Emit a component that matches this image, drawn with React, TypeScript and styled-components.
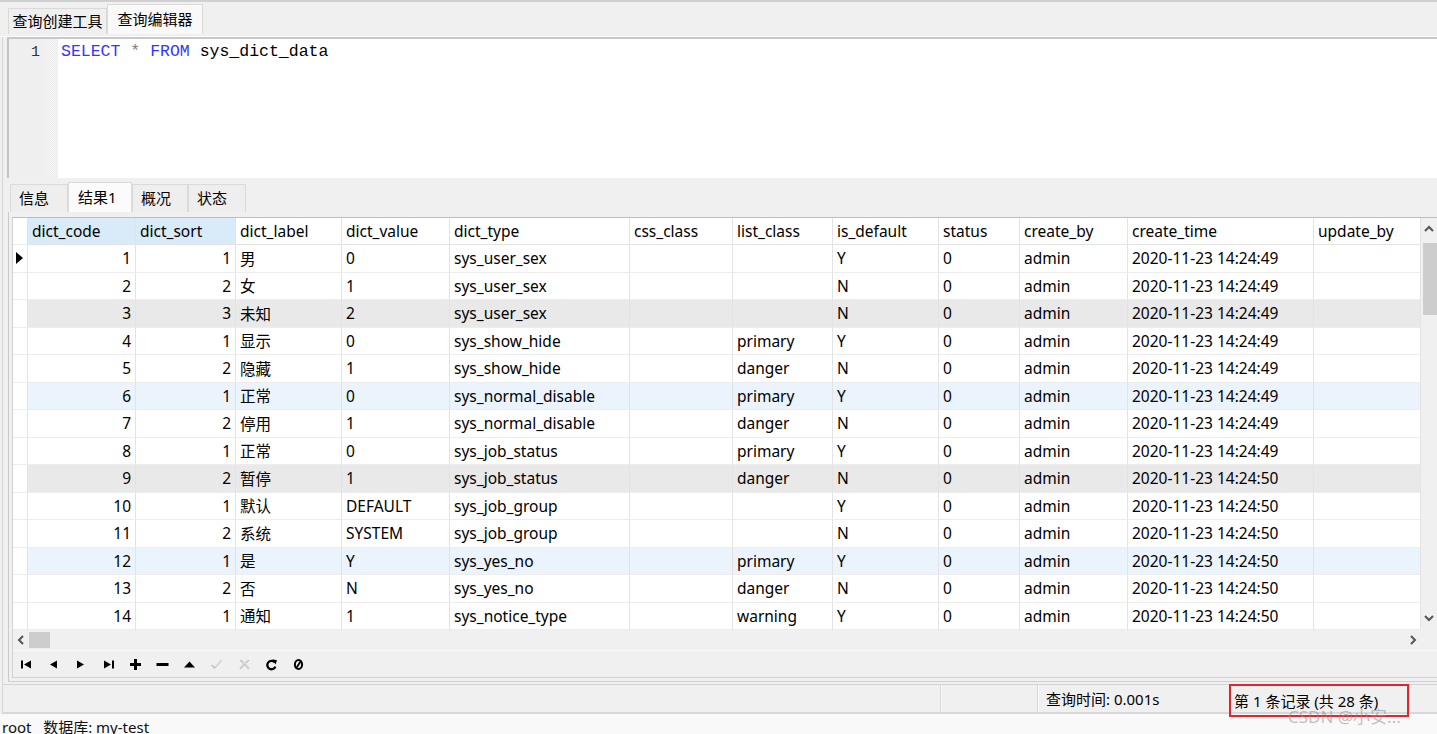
import React from 'react';
import styled, { createGlobalStyle } from 'styled-components';

const GlobalStyle = createGlobalStyle`
  html, body { margin: 0; padding: 0; background: #f0f0f0; }
  body {
    font-family: "Noto Sans", "Noto Sans CJK SC", sans-serif;
    color: #000;
  }
  * { box-sizing: border-box; }
`;

const COLS = '15px 108px 100px 106px 108px 180px 103px 100px 106px 81px 108px 186px 107px';

// Styled components
const Window = styled.div`
  position: relative;
  width: 1437px;
  height: 734px;
  overflow: hidden;
  background: #f0f0f0;
  display: flex;
  flex-direction: column;
`;

const TopBar = styled.div`
  height: 37px;
  border-top: 2px solid #d0d0d0;
  border-bottom: 1px solid #fbfbfb;
  display: flex;
  align-items: flex-end;
  padding: 0 0 2px 8px;
  flex-shrink: 0;
`;

const TopTab = styled.div<{ $active?: boolean; $w: number }>`
  width: ${p => p.$w}px;
  height: ${p => (p.$active ? 30 : 26)}px;
  padding-bottom: 2px;
  display: flex;
  align-items: center;
  justify-content: center;
  font-size: 15px;
  background: ${p => (p.$active ? '#f9f9f9' : '#efefef')};
  border: 1px solid #d9d9d9;
  border-bottom: none;
`;

const Workspace = styled.div`
  margin-left: 2px;
  border-left: 1px solid #d6d6d6;
  display: flex;
  flex-direction: column;
  flex-shrink: 0;
`;

const Editor = styled.div`
  height: 141px;
  margin-left: 4px;
  border-top: 2px solid #c8c8c8;
  border-left: 2px solid #c4c4c4;
  display: flex;
  background: #fff;
`;

const Gutter = styled.div`
  width: 35px;
  background: #efefef;
  text-align: right;
  padding: 4px 4px 0 0;
  font-family: "Liberation Mono", monospace;
  font-size: 15px;
  line-height: 20px;
  color: #333;
`;

const FoldStripe = styled.div`
  width: 14px;
  background-color: #f6f6f6;
  background-image: repeating-conic-gradient(#e9e9e9 0 25%, #f8f8f8 0 50%);
  background-size: 2px 2px;
`;

const Code = styled.div`
  flex: 1;
  padding: 3px 0 0 3px;
  font-family: "Liberation Mono", monospace;
  font-size: 16.5px;
  line-height: 20px;
  white-space: pre;
  color: #000;
`;

const Keyword = styled.span`
  color: #3535ff;
`;

const Star = styled.span`
  color: #808080;
`;

const ResultTabs = styled.div`
  height: 34px;
  display: flex;
  align-items: flex-end;
  padding-left: 7px;
`;

const ResultTab = styled.div<{ $active?: boolean; $w: number }>`
  width: ${p => p.$w}px;
  height: ${p => (p.$active ? 30 : 28)}px;
  padding-left: ${p => (p.$active ? 9 : 8)}px;
  padding-bottom: 3px;
  display: flex;
  align-items: center;
  font-size: 15px;
  background: ${p => (p.$active ? '#fbfbfb' : '#eeeeee')};
  border: 1px solid #dadada;
  border-bottom: none;
`;

const GridOuter = styled.div`
  margin-left: 5px;
  border-left: 1px solid #cacaca;
  border-bottom: 1px solid #cfcfcf;
  padding: 5px 0 3px 3px;
`;

const GridInner = styled.div`
  border-top: 1px solid #bdbdbd;
  border-left: 1px solid #d2d2d2;
  border-bottom: 1px solid #d2d2d2;
  display: flex;
  flex-direction: column;
`;

const Upper = styled.div`
  display: flex;
  height: 412px;
`;

const Table = styled.div`
  width: 1408px;
  background: #fff;
  overflow: hidden;
`;

const Row = styled.div<{ $h: number }>`
  display: grid;
  grid-template-columns: ${COLS};
  height: ${p => p.$h}px;
`;

const Cell = styled.div<{ $right?: boolean; $bg?: string; $head?: boolean }>`
  display: flex;
  align-items: center;
  justify-content: ${p => (p.$right ? 'flex-end' : 'flex-start')};
  padding: ${p => (p.$right ? '0 4px 0 0' : '0 0 0 4px')};
  background: ${p => p.$bg || '#fff'};
  border-right: 1px solid #e3e3e3;
  border-bottom: 1px solid ${p => (p.$head ? '#e3e3e3' : '#ededed')};
  font-size: 15.5px;
  white-space: nowrap;
  overflow: hidden;
`;

const Indicator = styled.div`
  display: flex;
  align-items: center;
  justify-content: center;
  padding-right: 2px;
  background: #fff;
  border-right: 1px solid #e3e3e3;
  border-bottom: 1px solid #ededed;
`;

const VScroll = styled.div`
  width: 16px;
  background: #f0f0f0;
  display: flex;
  flex-direction: column;
  align-items: center;
`;

const ArrowBox = styled.div<{ $h: number }>`
  height: ${p => p.$h}px;
  width: 16px;
  display: flex;
  align-items: center;
  justify-content: center;
`;

const VThumb = styled.div`
  width: 14px;
  height: 72px;
  margin: 3px 0 0 2px;
  background: #cdcdcd;
`;

const Spacer = styled.div`
  flex: 1;
`;

const HScroll = styled.div`
  height: 20px;
  display: flex;
  align-items: center;
  background: #f0f0f0;
`;

const HThumb = styled.div`
  width: 21px;
  height: 16px;
  background: #cdcdcd;
`;

const Toolbar = styled.div`
  height: 27px;
  display: flex;
  align-items: center;
  padding: 1px 0 0 0;
  border-top: 1px solid #fafafa;
`;

const ToolButton = styled.div`
  width: 27.2px;
  height: 20px;
  display: flex;
  align-items: center;
  justify-content: center;
`;

const StatusBar = styled.div`
  height: 30px;
  margin-top: 2px;
  display: flex;
  border-top: 1px solid #d3d3d3;
  border-bottom: 2px solid #d8d8d8;
  font-size: 15px;
`;

const StatusCell = styled.div<{ $w?: number; $pad?: number }>`
  ${p => (p.$w ? `width: ${p.$w}px;` : 'flex: 1;')}
  padding-left: ${p => p.$pad || 0}px;
  display: flex;
  align-items: center;
  border-left: 1px solid #d6d6d6;
  box-shadow: inset 1px 0 #fbfbfb;
  &:first-child { border-left: none; box-shadow: none; }
`;

const RecordCell = styled.div`
  width: 180px;
  height: 33px;
  margin-top: -1px;
  padding-left: 3px;
  display: flex;
  align-items: center;
  border: 2px solid #e3242b;
  position: relative;
  z-index: 1;
`;

const BottomStrip = styled.div`
  flex: 1;
  background: #f9f9f9;
  padding: 3px 0 0 2px;
  font-size: 15px;
  line-height: 20px;
  white-space: pre;
  color: #111;
`;

const Watermark = styled.div`
  position: absolute;
  left: 1288px;
  top: 703px;
  font-size: 17px;
  color: rgba(140, 140, 140, 0.55);
  z-index: 2;
  pointer-events: none;
`;

// Icons
const Chevron = ({ dir }: { dir: 'up' | 'down' | 'left' | 'right' }) => {
  const pts = {
    up: '1,6 5,2 9,6',
    down: '1,2 5,6 9,2',
    left: '6,1 2,5 6,9',
    right: '2,1 6,5 2,9',
  }[dir];
  const vertical = dir === 'up' || dir === 'down';
  return (
    <svg width={vertical ? 10 : 8} height={vertical ? 8 : 10} viewBox={vertical ? '0 0 10 8' : '0 0 8 10'}>
      <polyline points={pts} fill="none" stroke="#555" strokeWidth="2" />
    </svg>
  );
};

const RowPointer = () => (
  <svg width="7" height="12" viewBox="0 0 7 12">
    <polygon points="0,0 7,6 0,12" fill="#000" />
  </svg>
);

const Icon = ({ children }: { children: React.ReactNode }) => (
  <svg width="13" height="13" viewBox="0 0 13 13">{children}</svg>
);

const tools: React.ReactNode[] = [
  <Icon key="first"><rect x="1" y="2.5" width="2" height="8" /><polygon points="11,2.5 4,6.5 11,10.5" /></Icon>,
  <Icon key="prev"><polygon points="10,2.5 3,6.5 10,10.5" /></Icon>,
  <Icon key="next"><polygon points="3,2.5 10,6.5 3,10.5" /></Icon>,
  <Icon key="last"><polygon points="2,2.5 9,6.5 2,10.5" /><rect x="10" y="2.5" width="2" height="8" /></Icon>,
  <Icon key="add"><rect x="1" y="5" width="11" height="3" /><rect x="5" y="1" width="3" height="11" /></Icon>,
  <Icon key="del"><rect x="0.5" y="5" width="12" height="3" /></Icon>,
  <Icon key="up"><polygon points="1,9.5 6.5,3.5 12,9.5" /></Icon>,
  <Icon key="ok">
    <polyline points="1.5,7 4.5,10 11.5,2.5" fill="none" stroke="#c2c2c2" strokeWidth="1.3" />
    <polyline points="3,7.2 5,9 11,3.5" fill="none" stroke="#dadada" strokeWidth="1" />
  </Icon>,
  <Icon key="cancel">
    <path d="M2 2 L11 11 M11 2 L2 11" stroke="#c2c2c2" strokeWidth="1.1" fill="none" />
    <path d="M3.5 1.5 L11.5 9.5 M1.5 9.5 L9.5 1.5" stroke="#dadada" strokeWidth="1" fill="none" />
  </Icon>,
  <Icon key="refresh">
    <path d="M9.6 4.2 A4.2 4.2 0 1 0 10.4 8.6" fill="none" stroke="#000" strokeWidth="2.3" />
    <polygon points="7.2,1.2 12,2.2 10.6,6.6" fill="#000" />
  </Icon>,
  <Icon key="stop">
    <ellipse cx="6.5" cy="6.5" rx="3.6" ry="4.6" fill="none" stroke="#000" strokeWidth="2" />
    <line x1="4" y1="10.5" x2="9.2" y2="2.5" stroke="#000" strokeWidth="1.8" />
  </Icon>,
];

// Data
const headers = [
  'dict_code', 'dict_sort', 'dict_label', 'dict_value', 'dict_type', 'css_class',
  'list_class', 'is_default', 'status', 'create_by', 'create_time', 'update_by',
];

type DictRow = [string, string, string, string, string, string, string, string];

const rows: DictRow[] = [
  ['1', '1', '男', '0', 'sys_user_sex', '', 'Y', '49'],
  ['2', '2', '女', '1', 'sys_user_sex', '', 'N', '49'],
  ['3', '3', '未知', '2', 'sys_user_sex', '', 'N', '49'],
  ['4', '1', '显示', '0', 'sys_show_hide', 'primary', 'Y', '49'],
  ['5', '2', '隐藏', '1', 'sys_show_hide', 'danger', 'N', '49'],
  ['6', '1', '正常', '0', 'sys_normal_disable', 'primary', 'Y', '49'],
  ['7', '2', '停用', '1', 'sys_normal_disable', 'danger', 'N', '49'],
  ['8', '1', '正常', '0', 'sys_job_status', 'primary', 'Y', '49'],
  ['9', '2', '暂停', '1', 'sys_job_status', 'danger', 'N', '50'],
  ['10', '1', '默认', 'DEFAULT', 'sys_job_group', '', 'Y', '50'],
  ['11', '2', '系统', 'SYSTEM', 'sys_job_group', '', 'N', '50'],
  ['12', '1', '是', 'Y', 'sys_yes_no', 'primary', 'Y', '50'],
  ['13', '2', '否', 'N', 'sys_yes_no', 'danger', 'N', '50'],
  ['14', '1', '通知', '1', 'sys_notice_type', 'warning', 'Y', '50'],
];

const rowBg = (i: number) => {
  if (i === 2 || i === 8) return '#e9e9e9';
  if (i === 5 || i === 11) return '#ebf4fd';
  return '#fff';
};

// Component
const App: React.FC = () => {
  return (
    <Window>
      <GlobalStyle />
      <TopBar>
        <TopTab $w={99}>查询创建工具</TopTab>
        <TopTab $w={96} $active>查询编辑器</TopTab>
      </TopBar>

      <Workspace>
        <Editor>
          <Gutter>1</Gutter>
          <FoldStripe />
          <Code>
            <Keyword>SELECT</Keyword> <Star>*</Star> <Keyword>FROM</Keyword> sys_dict_data
          </Code>
        </Editor>

        <ResultTabs>
          <ResultTab $w={58}>信息</ResultTab>
          <ResultTab $w={64} $active>结果1</ResultTab>
          <ResultTab $w={56}>概况</ResultTab>
          <ResultTab $w={58}>状态</ResultTab>
        </ResultTabs>

        <GridOuter>
          <GridInner>
            <Upper>
              <Table>
                <Row $h={27}>
                  <Indicator />
                  {headers.map((h, i) => (
                    <Cell key={h} $head $bg={i < 2 ? '#d9eaf8' : '#fff'}>{h}</Cell>
                  ))}
                </Row>
                {rows.map((r, i) => {
                  const bg = rowBg(i);
                  return (
                    <Row key={r[0]} $h={27.5}>
                      <Indicator>{i === 0 && <RowPointer />}</Indicator>
                      <Cell $right $bg={bg}>{r[0]}</Cell>
                      <Cell $right $bg={bg}>{r[1]}</Cell>
                      <Cell $bg={bg}>{r[2]}</Cell>
                      <Cell $bg={bg}>{r[3]}</Cell>
                      <Cell $bg={bg}>{r[4]}</Cell>
                      <Cell $bg={bg} />
                      <Cell $bg={bg}>{r[5]}</Cell>
                      <Cell $bg={bg}>{r[6]}</Cell>
                      <Cell $bg={bg}>0</Cell>
                      <Cell $bg={bg}>admin</Cell>
                      <Cell $bg={bg}>2020-11-23 14:24:{r[7]}</Cell>
                      <Cell $bg={bg} />
                    </Row>
                  );
                })}
              </Table>
              <VScroll>
                <ArrowBox $h={22}><Chevron dir="up" /></ArrowBox>
                <VThumb />
                <Spacer />
                <ArrowBox $h={24}><Chevron dir="down" /></ArrowBox>
              </VScroll>
            </Upper>
            <HScroll>
              <ArrowBox $h={20}><Chevron dir="left" /></ArrowBox>
              <HThumb />
              <Spacer />
              <ArrowBox $h={20}><Chevron dir="right" /></ArrowBox>
              <ArrowBox $h={20} />
            </HScroll>
            <Toolbar>
              {tools.map((t, i) => (
                <ToolButton key={i}>{t}</ToolButton>
              ))}
            </Toolbar>
          </GridInner>
        </GridOuter>

        <StatusBar>
          <StatusCell />
          <StatusCell $w={97} />
          <StatusCell $w={192} $pad={8}>查询时间: 0.001s</StatusCell>
          <RecordCell>第 1 条记录 (共 28 条)</RecordCell>
          <StatusCell $w={28} />
        </StatusBar>
      </Workspace>

      <BottomStrip>root   数据库: my-test</BottomStrip>
      <Watermark>CSDN @小安...</Watermark>
    </Window>
  );
};

export default App;
